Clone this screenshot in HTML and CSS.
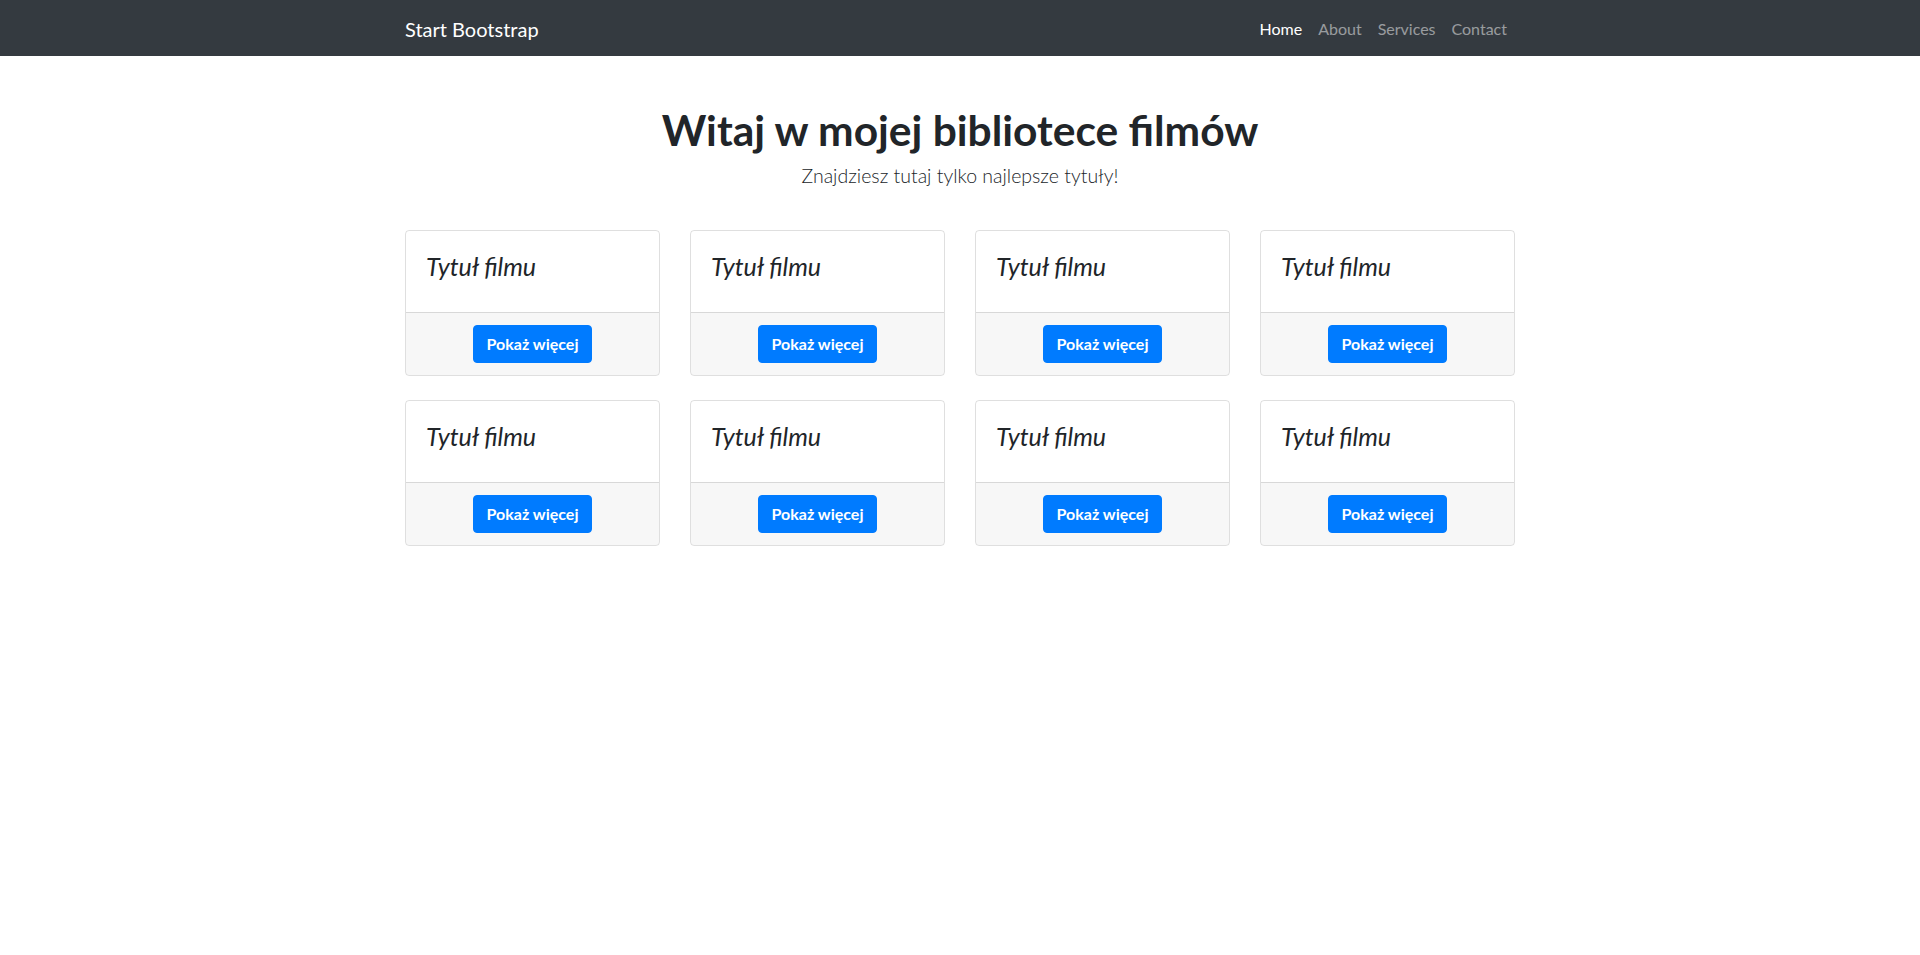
FILE: index.html
```html
<!DOCTYPE html>
<html lang="pl">
<head>
<meta charset="utf-8">
<title>Biblioteka filmów</title>
<link rel="stylesheet" href="styles.css">
</head>
<body>
<nav class="navbar">
  <div class="container nav-inner">
    <a class="brand" href="#">Start Bootstrap</a>
    <ul class="nav-links">
      <li><a class="nav-link active" href="#">Home</a></li>
      <li><a class="nav-link" href="#">About</a></li>
      <li><a class="nav-link" href="#">Services</a></li>
      <li><a class="nav-link" href="#">Contact</a></li>
    </ul>
  </div>
</nav>
<main class="container">
  <header class="intro">
    <h1 class="intro-title">Witaj w mojej bibliotece filmów</h1>
    <p class="lead">Znajdziesz tutaj tylko najlepsze tytuły!</p>
  </header>
  <section class="grid">
    <div class="card"><div class="card-body"><h4 class="card-title">Tytuł filmu</h4></div><div class="card-footer"><a class="btn" href="#">Pokaż więcej</a></div></div>
    <div class="card"><div class="card-body"><h4 class="card-title">Tytuł filmu</h4></div><div class="card-footer"><a class="btn" href="#">Pokaż więcej</a></div></div>
    <div class="card"><div class="card-body"><h4 class="card-title">Tytuł filmu</h4></div><div class="card-footer"><a class="btn" href="#">Pokaż więcej</a></div></div>
    <div class="card"><div class="card-body"><h4 class="card-title">Tytuł filmu</h4></div><div class="card-footer"><a class="btn" href="#">Pokaż więcej</a></div></div>
    <div class="card"><div class="card-body"><h4 class="card-title">Tytuł filmu</h4></div><div class="card-footer"><a class="btn" href="#">Pokaż więcej</a></div></div>
    <div class="card"><div class="card-body"><h4 class="card-title">Tytuł filmu</h4></div><div class="card-footer"><a class="btn" href="#">Pokaż więcej</a></div></div>
    <div class="card"><div class="card-body"><h4 class="card-title">Tytuł filmu</h4></div><div class="card-footer"><a class="btn" href="#">Pokaż więcej</a></div></div>
    <div class="card"><div class="card-body"><h4 class="card-title">Tytuł filmu</h4></div><div class="card-footer"><a class="btn" href="#">Pokaż więcej</a></div></div>
  </section>
</main>
</body>
</html>
```

FILE: styles.css
```css
* { box-sizing: border-box; }
html, body { margin: 0; padding: 0; }
body {
  font-family: Lato, "Open Sans", "Noto Sans", sans-serif;
  font-size: 16px;
  line-height: 1.5;
  color: #212529;
  background: #fff;
}
a { text-decoration: none; }
.container {
  width: 1140px;
  margin: 0 auto;
  padding: 0 15px;
}
.navbar {
  background: #343a40;
  padding: 9px 0 7px;
}
.nav-inner {
  display: flex;
  align-items: center;
  justify-content: space-between;
}
.brand {
  color: #fff;
  font-size: 20px;
  line-height: 30px;
  padding: 5px 0;
}
.nav-links {
  list-style: none;
  margin: 0;
  padding: 0;
  display: flex;
}
.nav-link {
  display: block;
  padding: 8px 8px;
  color: rgba(255,255,255,0.5);
  line-height: 24px;
  font-size: 16px;
}
.nav-link.active { color: #fff; }

.intro {
  text-align: center;
  padding-top: 48px;
}
.intro-title {
  margin: 0;
  font-size: 42.5px;
  line-height: 51px;
  font-weight: 700;
}
.lead {
  margin: 6px 0 0;
  font-size: 19.5px;
  font-weight: 300;
  line-height: 30px;
}
.grid {
  margin-top: 39px;
  display: grid;
  grid-template-columns: repeat(4, 1fr);
  column-gap: 30px;
  row-gap: 24px;
}
.card {
  border: 1px solid rgba(0,0,0,0.125);
  border-radius: 4px;
  display: flex;
  flex-direction: column;
  overflow: hidden;
}
.card-body {
  padding: 21px 20px 19px;
}
.card-title {
  margin: 0 0 12px;
  font-size: 25px;
  line-height: 29px;
  font-style: italic;
  font-weight: 400;
}
.card-footer {
  background: rgba(0,0,0,0.03);
  border-top: 1px solid rgba(0,0,0,0.125);
  padding: 12px 20px;
  text-align: center;
}
.btn {
  display: inline-block;
  background: #007bff;
  color: #fff;
  font-weight: 700;
  padding: 6px 13px;
  line-height: 24px;
  border: 1px solid #007bff;
  border-radius: 4px;
}
```
